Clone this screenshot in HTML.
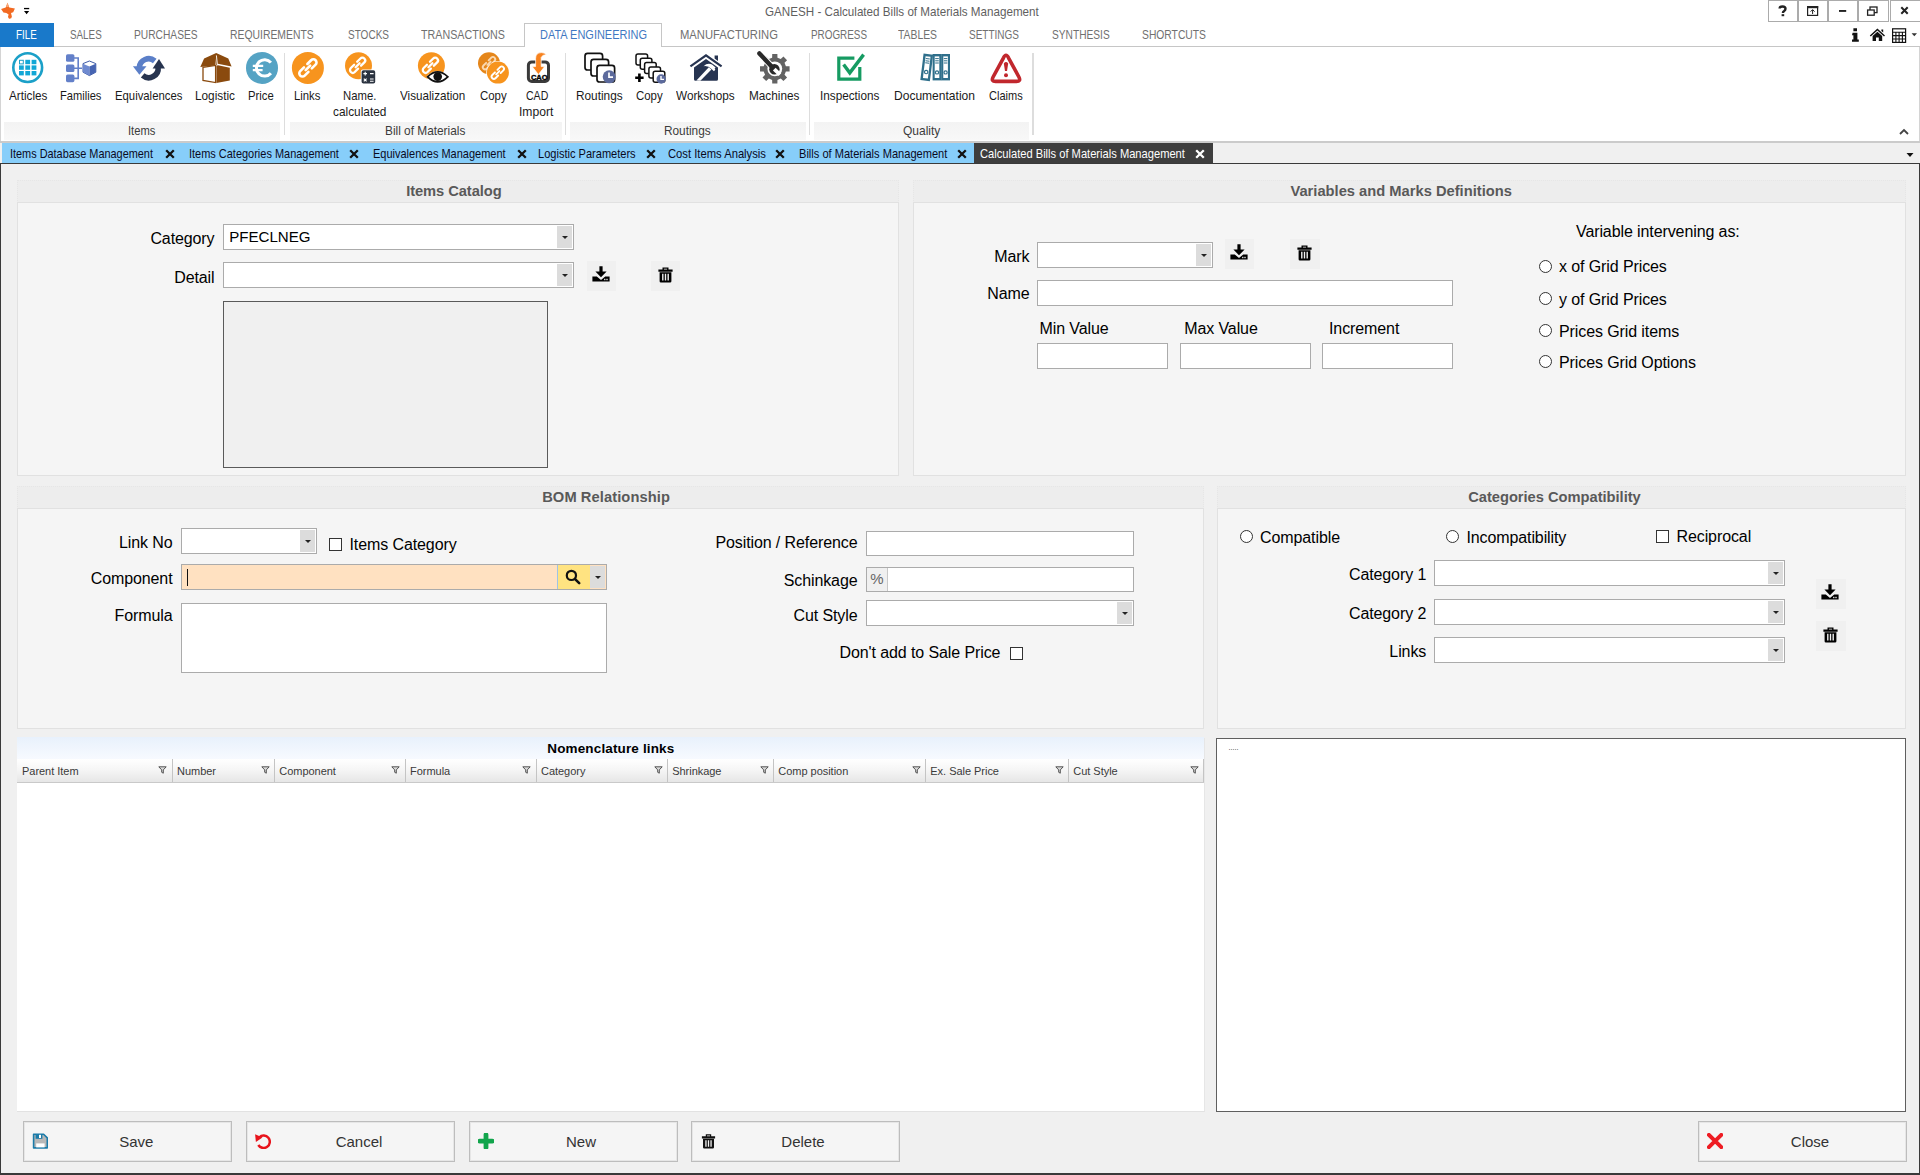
<!DOCTYPE html>
<html lang="en">
<head>
<meta charset="utf-8">
<title>GANESH - Calculated Bills of Materials Management</title>
<style>
*{box-sizing:border-box;margin:0;padding:0}
html,body{width:1920px;height:1175px;overflow:hidden}
body{position:relative;background:#f0f0f0;font-family:"Liberation Sans",sans-serif;color:#000;font-size:16px}
.a{position:absolute}
.t{position:absolute;white-space:nowrap;line-height:1}
/* title / ribbon */
#top{left:0;top:0;width:1920px;height:142px;background:#fff}
.rt{position:absolute;top:28px;font-size:11.6px;color:#6a6a6a;white-space:nowrap;line-height:14px;transform-origin:0 0}
.rl{position:absolute;font-size:11.7px;color:#1e1e1e;white-space:nowrap;line-height:16px;text-align:center;transform:translateX(-50%)}
.gl{position:absolute;top:124px;font-size:11.7px;color:#444;white-space:nowrap;line-height:14px;text-align:center;transform:translateX(-50%)}
.gs{position:absolute;top:122px;height:18px;background:#f4f4f4}
.sep{position:absolute;top:53px;width:1px;height:82px;background:#dcdcdc}
.ic{position:absolute;top:51px;width:34px;height:34px}
/* doc tabs */
.dt{position:absolute;top:147px;font-size:11.5px;color:#0a0a14;white-space:nowrap;line-height:14px}
.dx{position:absolute;top:149px;width:9px;height:9px}
/* panels */
.ph{position:absolute;background:#ededed;border:1px dotted #e6e6e6}
.pb{position:absolute;background:#f5f5f5;border:1px solid #e1e1e1}
.pt{position:absolute;font-weight:bold;font-size:14.6px;color:#595959;white-space:nowrap;line-height:16px;transform:translateX(-50%)}
.lb{position:absolute;white-space:nowrap;line-height:18px;font-size:16px;color:#000}
.lr{text-align:right}
.in{position:absolute;background:#fff;border:1px solid #ababab}
.db{position:absolute;background:#dcdcdc}
.db:after{content:"";position:absolute;left:50%;top:50%;margin:-1px 0 0 -3px;border:3px solid transparent;border-top:3px solid #222;border-bottom:0}
.sb{position:absolute;width:29.5px;height:30px;background:#f0f0f0}
  .sb svg{position:absolute;left:5.4px;top:5px;width:18px;height:18px}
.rd{position:absolute;width:13px;height:13px;border:1px solid #333;border-radius:50%;background:#fff}
.cb{position:absolute;width:13px;height:13px;border:1px solid #333;background:#fff}
/* grid */
.gh{position:absolute;top:764px;font-size:11.5px;color:#222;white-space:nowrap;line-height:14px}
.gsep{position:absolute;top:759px;width:1px;height:23px;background:#c8c8c8}
.gf{position:absolute;top:765px;width:9px;height:9px}
/* buttons */
.bt{position:absolute;top:1121px;height:41px;width:208.5px;background:#f5f5f5;border:1px solid #bdbdbd;box-shadow:inset 0 0 0 1px #e6e6e6}
.bt span{position:absolute;left:0;right:0;top:11px;text-align:center;font-size:15px;line-height:18px;color:#333}
.bt svg{position:absolute;left:8px;top:11px;width:16px;height:16px}
</style>
</head>
<body>
<div id="top" class="a"></div>
<svg class="a" style="left:0;top:0" width="40" height="22" viewBox="0 0 40 22"><path d="M7.500 2.800 L9.300 7.600 L14.900 8.400 L13.200 12.200 L11 13 L11.900 16.400 Q11.800 18.900 9 18.700 L8 17 L8.600 14.400 L6.400 13 L3.400 12.500 L1.100 9 L5.700 7.600 Z" fill="#f26a22"/><path d="M7.500 2.800 L8.900 7 L6.100 7 Z" fill="#f8a878"/><rect x="24" y="7.900" width="5.200" height="1.300" fill="#000"/><path d="M24 11.100 h5.200 l-2.600 3.200 z" fill="#000"/></svg>
<span class="t" style="top:3.8px;font-size:12.4px;line-height:16px;left:765px;transform:scaleX(0.9399);transform-origin:0 0;color:#5f5f5f;">GANESH - Calculated Bills of Materials Management</span>
<div class="a" style="left:1768px;top:0px;width:30px;height:22px;border:1px solid #ababab;background:#fff"></div>
<div class="a" style="left:1798px;top:0px;width:30px;height:22px;border:1px solid #ababab;background:#fff"></div>
<div class="a" style="left:1828px;top:0px;width:30px;height:22px;border:1px solid #ababab;background:#fff"></div>
<div class="a" style="left:1858px;top:0px;width:30.5px;height:22px;border:1px solid #ababab;background:#fff"></div>
<div class="a" style="left:1890px;top:0px;width:31px;height:22px;border:1px solid #ababab;background:#fff"></div>
<svg class="a" style="left:1760px;top:0" width="160" height="46" viewBox="1760 0 160 46"><path d="M1779.6 8.6 q0 -2.1 2.9 -2.1 q3 0 3 2.3 q0 1.3 -1.3 2.1 q-1.3 .8 -1.3 2.1" fill="none" stroke="#222" stroke-width="2.4"/><rect x="1781.600" y="14.200" width="2.600" height="2" fill="#222"/><rect x="1807.6" y="6.6" width="10" height="8.8" fill="none" stroke="#222" stroke-width="1.2"/><rect x="1807" y="6" width="11.2" height="2.2" fill="#222"/><path d="M1812.6 14 v-4 M1810.6 11.6 l2 -2 l2 2" fill="none" stroke="#222" stroke-width="1"/><rect x="1839" y="10" width="7.2" height="1.9" fill="#222"/><rect x="1870" y="7" width="7" height="5.6" fill="#fff" stroke="#222" stroke-width="1.3"/><rect x="1867.6" y="10" width="6.6" height="5.2" fill="#fff" stroke="#222" stroke-width="1.3"/><path d="M1901.3 7.3 l6.4 6.4 M1907.7 7.3 l-6.4 6.4" stroke="#222" stroke-width="2"/><path d="M1853.4 28.2 h3.6 v3 h-3.6z M1852.6 32.8 h4.8 v6.6 h1.4 v2.4 h-6.8 v-2.4 h1.4 v-4.2 h-1.4z" fill="#111"/><path d="M1877.4 28.6 l7.6 6.8 l-1 1 l-6.6 -5.8 l-6.6 5.8 l-1 -1z M1872.6 36 l4.8 -4.2 l4.8 4.2 v5 h-3.4 v-3.6 h-2.8 v3.6 h-3.4z M1881.4 29.4 h1.8 v3.2 l-1.8 -1.6z" fill="#111"/><rect x="1892.6" y="28.8" width="13" height="13.6" fill="#fff" stroke="#111" stroke-width="1.2"/><path d="M1892.6 32.2 h13 M1892.6 35.6 h13 M1892.6 39 h13 M1895.9 32.2 v10 M1899.1 32.2 v10 M1902.4 32.2 v10" stroke="#111" stroke-width="1.1"/><path d="M1911.6 33.2 h5.4 l-2.7 3z" fill="#333"/></svg>
<div class="a" style="left:0px;top:46px;width:1920px;height:1px;background:#c6c6c6"></div>
<div class="a" style="left:0px;top:23px;width:54px;height:24px;background:#1979ca"></div>
<div class="a" style="left:524px;top:23px;width:138px;height:24px;background:#fff;border:1px solid #c6c6c6;border-bottom:0"></div>
<span class="t" style="top:26.63px;font-size:12.6px;line-height:16px;left:16px;transform:scaleX(0.7779);transform-origin:0 0;color:#fff;">FILE</span>
<span class="t" style="top:26.63px;font-size:12.6px;line-height:16px;left:70px;transform:scaleX(0.7803);transform-origin:0 0;color:#707070;">SALES</span>
<span class="t" style="top:26.63px;font-size:12.6px;line-height:16px;left:134.3px;transform:scaleX(0.8123);transform-origin:0 0;color:#707070;">PURCHASES</span>
<span class="t" style="top:26.63px;font-size:12.6px;line-height:16px;left:230.3px;transform:scaleX(0.8246);transform-origin:0 0;color:#707070;">REQUIREMENTS</span>
<span class="t" style="top:26.63px;font-size:12.6px;line-height:16px;left:348px;transform:scaleX(0.7949);transform-origin:0 0;color:#707070;">STOCKS</span>
<span class="t" style="top:26.63px;font-size:12.6px;line-height:16px;left:421px;transform:scaleX(0.8510);transform-origin:0 0;color:#707070;">TRANSACTIONS</span>
<span class="t" style="top:26.63px;font-size:12.6px;line-height:16px;left:540.3px;transform:scaleX(0.8717);transform-origin:0 0;color:#3f78c2;">DATA ENGINEERING</span>
<span class="t" style="top:26.63px;font-size:12.6px;line-height:16px;left:680.3px;transform:scaleX(0.8917);transform-origin:0 0;color:#707070;">MANUFACTURING</span>
<span class="t" style="top:26.63px;font-size:12.6px;line-height:16px;left:811px;transform:scaleX(0.7841);transform-origin:0 0;color:#707070;">PROGRESS</span>
<span class="t" style="top:26.63px;font-size:12.6px;line-height:16px;left:898px;transform:scaleX(0.8230);transform-origin:0 0;color:#707070;">TABLES</span>
<span class="t" style="top:26.63px;font-size:12.6px;line-height:16px;left:969.3px;transform:scaleX(0.7936);transform-origin:0 0;color:#707070;">SETTINGS</span>
<span class="t" style="top:26.63px;font-size:12.6px;line-height:16px;left:1052.3px;transform:scaleX(0.8079);transform-origin:0 0;color:#707070;">SYNTHESIS</span>
<span class="t" style="top:26.63px;font-size:12.6px;line-height:16px;left:1142px;transform:scaleX(0.8187);transform-origin:0 0;color:#707070;">SHORTCUTS</span>
<div class="a" style="left:0px;top:47px;width:1px;height:94px;background:#d4d4d4"></div>
<div class="a" style="left:1919px;top:47px;width:1px;height:94px;background:#d4d4d4"></div>
<div class="a" style="left:0px;top:140.8px;width:1920px;height:1.8px;background:#cbcbcb"></div>
<div class="a" style="left:3.5px;top:122px;width:276.5px;height:17.5px;background:linear-gradient(#f3f3f3,#f8f8f8)"></div>
<div class="a" style="left:289.5px;top:122px;width:272.2px;height:17.5px;background:linear-gradient(#f3f3f3,#f8f8f8)"></div>
<div class="a" style="left:570px;top:122px;width:235.7px;height:17.5px;background:linear-gradient(#f3f3f3,#f8f8f8)"></div>
<div class="a" style="left:814.3px;top:122px;width:215px;height:17.5px;background:linear-gradient(#f3f3f3,#f8f8f8)"></div>
<div class="a" style="left:283.5px;top:53px;width:1.4px;height:82px;background:#dddddd"></div>
<div class="a" style="left:564.8px;top:53px;width:1.4px;height:82px;background:#dddddd"></div>
<div class="a" style="left:808.5px;top:53px;width:1.4px;height:82px;background:#dddddd"></div>
<div class="a" style="left:1032.3px;top:53px;width:1.4px;height:82px;background:#dddddd"></div>
<span class="t" style="top:123.1px;font-size:12.4px;line-height:16px;left:128.3px;transform:scaleX(0.9038);transform-origin:0 0;color:#3c3c3c;">Items</span>
<span class="t" style="top:123.1px;font-size:12.4px;line-height:16px;left:385.3px;transform:scaleX(0.9563);transform-origin:0 0;color:#3c3c3c;">Bill of Materials</span>
<span class="t" style="top:123.1px;font-size:12.4px;line-height:16px;left:664.3px;transform:scaleX(0.9542);transform-origin:0 0;color:#3c3c3c;">Routings</span>
<span class="t" style="top:123.1px;font-size:12.4px;line-height:16px;left:903.3px;transform:scaleX(0.9691);transform-origin:0 0;color:#3c3c3c;">Quality</span>
<span class="t" style="top:88.1px;font-size:12.4px;line-height:16px;left:9.3px;transform:scaleX(0.9446);transform-origin:0 0;color:#1a1a1a;">Articles</span>
<span class="t" style="top:88.1px;font-size:12.4px;line-height:16px;left:60.3px;transform:scaleX(0.8969);transform-origin:0 0;color:#1a1a1a;">Families</span>
<span class="t" style="top:88.1px;font-size:12.4px;line-height:16px;left:115.3px;transform:scaleX(0.9138);transform-origin:0 0;color:#1a1a1a;">Equivalences</span>
<span class="t" style="top:88.1px;font-size:12.4px;line-height:16px;left:195.3px;transform:scaleX(0.9514);transform-origin:0 0;color:#1a1a1a;">Logistic</span>
<span class="t" style="top:88.1px;font-size:12.4px;line-height:16px;left:248.3px;transform:scaleX(0.9097);transform-origin:0 0;color:#1a1a1a;">Price</span>
<span class="t" style="top:88.1px;font-size:12.4px;line-height:16px;left:294.3px;transform:scaleX(0.9120);transform-origin:0 0;color:#1a1a1a;">Links</span>
<span class="t" style="top:88.1px;font-size:12.4px;line-height:16px;left:343.3px;transform:scaleX(0.9145);transform-origin:0 0;color:#1a1a1a;">Name.</span>
<span class="t" style="top:103.9px;font-size:12.4px;line-height:16px;left:333.3px;transform:scaleX(0.9564);transform-origin:0 0;color:#1a1a1a;">calculated</span>
<span class="t" style="top:88.1px;font-size:12.4px;line-height:16px;left:400px;transform:scaleX(0.9410);transform-origin:0 0;color:#1a1a1a;">Visualization</span>
<span class="t" style="top:88.1px;font-size:12.4px;line-height:16px;left:480px;transform:scaleX(0.9224);transform-origin:0 0;color:#1a1a1a;">Copy</span>
<span class="t" style="top:88.1px;font-size:12.4px;line-height:16px;left:526px;transform:scaleX(0.8518);transform-origin:0 0;color:#1a1a1a;">CAD</span>
<span class="t" style="top:103.9px;font-size:12.4px;line-height:16px;left:519.3px;transform:scaleX(0.9789);transform-origin:0 0;color:#1a1a1a;">Import</span>
<span class="t" style="top:88.1px;font-size:12.4px;line-height:16px;left:576px;transform:scaleX(0.9542);transform-origin:0 0;color:#1a1a1a;">Routings</span>
<span class="t" style="top:88.1px;font-size:12.4px;line-height:16px;left:636px;transform:scaleX(0.9224);transform-origin:0 0;color:#1a1a1a;">Copy</span>
<span class="t" style="top:88.1px;font-size:12.4px;line-height:16px;left:676px;transform:scaleX(0.9499);transform-origin:0 0;color:#1a1a1a;">Workshops</span>
<span class="t" style="top:88.1px;font-size:12.4px;line-height:16px;left:749.3px;transform:scaleX(0.9497);transform-origin:0 0;color:#1a1a1a;">Machines</span>
<span class="t" style="top:88.1px;font-size:12.4px;line-height:16px;left:820.3px;transform:scaleX(0.9470);transform-origin:0 0;color:#1a1a1a;">Inspections</span>
<span class="t" style="top:88.1px;font-size:12.4px;line-height:16px;left:894.3px;transform:scaleX(0.9712);transform-origin:0 0;color:#1a1a1a;">Documentation</span>
<span class="t" style="top:88.1px;font-size:12.4px;line-height:16px;left:989.3px;transform:scaleX(0.8894);transform-origin:0 0;color:#1a1a1a;">Claims</span>
<svg class="a" style="left:1896.500px;top:127px" width="14" height="10" viewBox="0 0 14 10"><path d="M3 7 l4 -4 l4 4" fill="none" stroke="#444" stroke-width="1.8"/></svg>
<svg class="a" style="left:0;top:46px" width="1100" height="80" viewBox="0 46 1100 80"><circle cx="27.7" cy="67.6" r="14.4" fill="#fff" stroke="#1ba0c8" stroke-width="2.6"/><rect x="19.5" y="60.3" width="3.8" height="3.6" fill="#fff" stroke="#1ba0c8" stroke-width="1"/><rect x="25.3" y="59.8" width="4.8" height="4.4" fill="#12a7d6"/><rect x="31.6" y="59.8" width="4.8" height="4.4" fill="#12a7d6"/><rect x="19.0" y="65.4" width="4.8" height="4.4" fill="#12a7d6"/><rect x="25.3" y="65.4" width="4.8" height="4.4" fill="#12a7d6"/><rect x="31.6" y="65.4" width="4.8" height="4.4" fill="#12a7d6"/><rect x="19.0" y="71.0" width="4.8" height="4.4" fill="#12a7d6"/><rect x="25.3" y="71.0" width="4.8" height="4.4" fill="#12a7d6"/><rect x="31.6" y="71.0" width="4.8" height="4.4" fill="#12a7d6"/><rect x="66" y="54.2" width="8.4" height="7.6" rx="1.6" fill="#6380c9"/><rect x="66" y="64.4" width="8.4" height="7.6" rx="1.6" fill="#6380c9"/><rect x="66" y="74.6" width="8.4" height="7.6" rx="1.6" fill="#6380c9"/><path d="M74 58 h4.2 v20.4 h-4.2 M74 68.2 h8" fill="none" stroke="#6380c9" stroke-width="1.6"/><path d="M89.4 61 l6.4 2.6 v8.6 l-6.4 3.4 l-6.4 -3.4 v-8.6z" fill="#fff" stroke="#3d5aa6" stroke-width="1"/><path d="M83 63.8 l6.4 2.8 v9 l-6.4 -3.4z" fill="#6f8ad0"/><path d="M95.8 63.8 l-6.4 2.8 v9 l6.4 -3.4z" fill="#4664b2"/><path d="M154.740 61 A9.400 9.400 0 0 0 139.300 67.400" fill="none" stroke="#5b7fc8" stroke-width="5.600"/><path d="M132.900 66.200 h13.600 l-7.100 8.600z" fill="#5b7fc8"/><path d="M142.660 75.400 A9.400 9.400 0 0 0 158.100 67.200" fill="none" stroke="#27344f" stroke-width="5.600"/><path d="M152.600 68.400 l6.400 -9.400 l6 9.400z" fill="#27344f"/><path d="M200.300 67 l3.800 -8.400 l12.100 -5.600 l12.100 5.600 l3.300 8 l-13.800 -2.800 l-1.600 1.600 l0 -9.400 l-.8 9.600z" fill="#8a4a0e"/><path d="M216.400 55.400 l1 9.200" fill="none" stroke="#fff" stroke-width=".9"/><path d="M203 67.400 l12.600 -2 v17.200 l-12.600 -2.200z" fill="#fff" stroke="#8a4a0e" stroke-width="1.300"/><path d="M216.400 65.800 l1.600 -.6 l11.800 2.600 v12.600 l-13.400 2.600z" fill="#8a4a0e"/><circle cx="262" cy="67.9" r="16" fill="#55a3c4"/><path d="M270.900 62.600 A8.200 8.200 0 1 0 270.900 73.200" fill="none" stroke="#fff" stroke-width="3"/><path d="M252.800 65.800 h10.400 M252.800 70.100 h9.800" stroke="#fff" stroke-width="2.300"/><circle cx="307.9" cy="67.9" r="16" fill="#f7941e"/><path d="M310.30 64.75 H315.60 A3.15 3.15 0 0 1 315.60 71.05 H310.30 M305.50 64.75 H300.20 A3.15 3.15 0 0 0 300.20 71.05 H305.50 M304.70 67.90 H311.10" fill="none" stroke="#fff" stroke-width="2.60" stroke-linecap="round" transform="rotate(-45 307.90 67.90)"/><circle cx="358.5" cy="65.700" r="13.500" fill="#f7941e"/><path d="M359.71 62.43 H364.38 A2.77 2.77 0 0 1 364.38 67.97 H359.71 M355.49 62.43 H350.82 A2.77 2.77 0 0 0 350.82 67.97 H355.49 M354.78 65.20 H360.42" fill="none" stroke="#fff" stroke-width="2.29" stroke-linecap="round" transform="rotate(-45 357.60 65.20)"/><rect x="360.8" y="69.4" width="15" height="14.8" rx="2" fill="#fff"/><rect x="361.6" y="70.2" width="13.6" height="13.4" rx="1.8" fill="#2b3340"/><path d="M363.4 73.6 h3.6 M365.2 71.8 v3.6 M370 73.6 h3.6 M363.8 78.6 l2.8 2.8 M366.6 78.6 l-2.8 2.8 M370 79 h3.6 M370 81.2 h3.6" stroke="#fff" stroke-width="1.1"/><circle cx="431.4" cy="65.700" r="13.500" fill="#f7941e"/><path d="M432.51 62.43 H437.18 A2.77 2.77 0 0 1 437.18 67.97 H432.51 M428.29 62.43 H423.62 A2.77 2.77 0 0 0 423.62 67.97 H428.29 M427.58 65.20 H433.22" fill="none" stroke="#fff" stroke-width="2.29" stroke-linecap="round" transform="rotate(-45 430.40 65.20)"/><path d="M426.4 76.8 Q437.7 65.4 449 76.8 Q437.7 88.2 426.4 76.8z" fill="#fff"/><path d="M427.6 76.8 Q437.7 67 447.8 76.8 Q437.7 86.6 427.6 76.8z" fill="#fff" stroke="#111" stroke-width="1.8"/><circle cx="437.7" cy="76.6" r="4.3" fill="#111"/><circle cx="489" cy="63.200" r="11" fill="#e5861a"/><path d="M490.73 60.93 H494.54 A2.27 2.27 0 0 1 494.54 65.47 H490.73 M487.27 60.93 H483.46 A2.27 2.27 0 0 0 483.46 65.47 H487.27 M486.70 63.20 H491.30" fill="none" stroke="#fbd9b0" stroke-width="1.87" stroke-linecap="round" transform="rotate(-45 489.00 63.20)"/><circle cx="497.900" cy="72.600" r="11.700" fill="#fff"/><circle cx="497.900" cy="72.600" r="11" fill="#f7941e"/><path d="M499.53 70.43 H503.34 A2.27 2.27 0 0 1 503.34 74.97 H499.53 M496.07 70.43 H492.26 A2.27 2.27 0 0 0 492.26 74.97 H496.07 M495.50 72.70 H500.10" fill="none" stroke="#fff" stroke-width="1.87" stroke-linecap="round" transform="rotate(-45 497.80 72.70)"/><rect x="528.400" y="61.900" width="20.100" height="19.500" rx="3.400" fill="#fff" stroke="#3a3a3a" stroke-width="3"/><path d="M535.600 66.600 V58.500 Q535.600 52.600 541.500 52.600 Q544.500 52.600 546.400 54.800 Q542.800 54.200 541.200 57.400 V66.600 H544.600 L538.400 74.600 L532.200 66.600 Z" fill="#f7821e" stroke="#fff" stroke-width=".7"/><text x="539.300" y="80.400" font-family="Liberation Sans,sans-serif" font-weight="bold" font-size="7.200" text-anchor="middle" fill="#000" stroke="#000" stroke-width=".35" textLength="16.800" lengthAdjust="spacingAndGlyphs">CAO</text><rect x="585.0" y="53.4" width="17.6" height="16.6" rx="2.6" fill="#fff" stroke="#111" stroke-width="1.7"/><rect x="591.0" y="59.4" width="17.6" height="16.6" rx="2.6" fill="#fff" stroke="#111" stroke-width="1.7"/><rect x="597.0" y="65.4" width="17.6" height="16.6" rx="2.6" fill="#fff" stroke="#111" stroke-width="1.7"/><circle cx="609.2" cy="76.8" r="6.5" fill="#5c6a9c"/><path d="M609 72.6 v4.6 h4" fill="none" stroke="#fff" stroke-width="1.7"/><rect x="636.0" y="54.0" width="11.6" height="11" rx="2" fill="#fff" stroke="#111" stroke-width="1.5"/><rect x="640.3" y="58.3" width="11.6" height="11" rx="2" fill="#fff" stroke="#111" stroke-width="1.5"/><rect x="644.6" y="62.6" width="11.6" height="11" rx="2" fill="#fff" stroke="#111" stroke-width="1.5"/><rect x="648.9" y="66.9" width="11.6" height="11" rx="2" fill="#fff" stroke="#111" stroke-width="1.5"/><rect x="653.2" y="71.2" width="11.6" height="11" rx="2" fill="#fff" stroke="#111" stroke-width="1.5"/><path d="M635.2 77.8 h8.4 M639.4 73.6 v8.4" stroke="#000" stroke-width="2.6"/><circle cx="661.2" cy="79" r="4.7" fill="#5c6a9c"/><path d="M661 76 v3.400 h3" fill="none" stroke="#fff" stroke-width="1.4"/><path d="M706 54 l16.2 11.400 l-1.200 1.800 l-15 -10.400 l-15 10.400 l-1.200 -1.800z" fill="#273451"/><path d="M714.6 55.400 h3.400 v5.600 l-3.400 -2.400z" fill="#273451"/><path d="M694 67.4 l12 -8.400 l12 8.400 v11.800 q0 1.600 -1.600 1.600 h-20.800 q-1.600 0 -1.600 -1.600z" fill="#273451"/><path d="M696.400 80.400 l12.400 -13.200 l2.600 2.200 l-11 11.400z" fill="#fff"/><path d="M703.600 66.200 q3.600 -3.600 8.400 -1.800 l3.600 3.200 l-1 1.200 l.8 .8 l-1.400 1.600 l-2.800 -2.400 q-2.600 -3.200 -7.600 -2.600z" fill="#fff"/><polygon points="789.58,66.22 789.58,71.38 785.89,71.46 784.52,74.76 787.07,77.43 783.43,81.07 780.76,78.52 777.46,79.89 777.38,83.58 772.22,83.58 772.14,79.89 768.84,78.52 766.17,81.07 762.53,77.43 765.08,74.76 763.71,71.46 760.02,71.38 760.02,66.22 763.71,66.14 765.08,62.84 762.53,60.17 766.17,56.53 768.84,59.08 772.14,57.71 772.22,54.02 777.38,54.02 777.46,57.71 780.76,59.08 783.43,56.53 787.07,60.17 784.52,62.84 785.89,66.14" fill="#636363"/><circle cx="774.8" cy="68.800" r="7.400" fill="#fff"/><path d="M759.4 53.4 L771.6 66.4" stroke="#fff" stroke-width="6.4" stroke-linecap="round"/><path d="M759.4 53.4 L771.6 66.4" stroke="#2a2a2a" stroke-width="4.4" stroke-linecap="round"/><circle cx="774.4" cy="69.2" r="5.200" fill="#2a2a2a"/><rect x="772.500" y="69" width="3.800" height="8" fill="#fff" transform="rotate(-45 774.400 69.200)"/><path d="M859.800 67 v12.200 h-21 v-21 h15.600" fill="none" stroke="#169b62" stroke-width="3.2"/><path d="M843.600 64.400 l6.200 8.400 l13.800 -18.200" fill="none" stroke="#169b62" stroke-width="3.400"/><g transform="rotate(7 926 70)"><rect x="921.6" y="54" width="9.6" height="26.6" fill="#2f6f8b"/><rect x="923.900" y="56.400" width="5" height="21.800" fill="#fff"/><path d="M924.400 58.600 h4 M924.400 60.800 h4 M924.400 63 h4" stroke="#2f6f8b" stroke-width="1"/><circle cx="926.400" cy="72" r="1.700" fill="#fff" stroke="#2f6f8b" stroke-width="1.200"/></g><rect x="932.6" y="54" width="8.8" height="26.400" fill="#2f6f8b"/><rect x="934.7" y="56.400" width="4.600" height="21.600" fill="#fff"/><path d="M935.2 58.600 h3.600 M935.2 60.800 h3.600 M935.2 63 h3.600" stroke="#2f6f8b" stroke-width="1"/><circle cx="937.0" cy="72.400" r="1.600" fill="#fff" stroke="#2f6f8b" stroke-width="1.200"/><rect x="941.2" y="54" width="8.8" height="26.400" fill="#2f6f8b"/><rect x="943.3" y="56.400" width="4.600" height="21.600" fill="#fff"/><path d="M943.8 58.600 h3.600 M943.8 60.800 h3.600 M943.8 63 h3.600" stroke="#2f6f8b" stroke-width="1"/><circle cx="945.6" cy="72.400" r="1.600" fill="#fff" stroke="#2f6f8b" stroke-width="1.200"/><path d="M1003.500 57.800 Q1006 52.600 1008.500 57.800 L1018.900 77 Q1021.200 81.400 1016.400 81.400 H995.600 Q990.800 81.400 993.100 77 Z" fill="#fff" stroke="#c1272d" stroke-width="3.600" stroke-linejoin="round"/><path d="M1003.800 63.400 q2.200 -2.800 4.400 0 l-1.200 7.600 h-2z" fill="#c1272d"/><circle cx="1006" cy="75.300" r="2" fill="#c1272d"/></svg>
<div class="a" style="left:0px;top:142.6px;width:1920px;height:21.4px;background:#f0f0f0"></div>
<div class="a" style="left:2px;top:143px;width:972px;height:20px;background:#87cefa"></div>
<div class="a" style="left:974px;top:143px;width:239px;height:20px;background:#3e3e3e"></div>
<div class="a" style="left:0px;top:163px;width:1920px;height:1.4px;background:#3a3a3a"></div>
<span class="t" style="top:146.01px;font-size:12.1px;line-height:16px;left:10px;transform:scaleX(0.9009);transform-origin:0 0;color:#0a0a1e;">Items Database Management</span>
<svg class="a" style="left:164.7px;top:148.6px" width="10" height="10" viewBox="0 0 10 10"><path d="M1.200 1.300 l7.600 7.400 M8.800 1.300 l-7.600 7.400" stroke="#111" stroke-width="2.300"/></svg>
<span class="t" style="top:146.01px;font-size:12.1px;line-height:16px;left:189px;transform:scaleX(0.9066);transform-origin:0 0;color:#0a0a1e;">Items Categories Management</span>
<svg class="a" style="left:349.3px;top:148.6px" width="10" height="10" viewBox="0 0 10 10"><path d="M1.200 1.300 l7.600 7.400 M8.800 1.300 l-7.600 7.400" stroke="#111" stroke-width="2.300"/></svg>
<span class="t" style="top:146.01px;font-size:12.1px;line-height:16px;left:373.3px;transform:scaleX(0.9091);transform-origin:0 0;color:#0a0a1e;">Equivalences Management</span>
<svg class="a" style="left:516.7px;top:148.6px" width="10" height="10" viewBox="0 0 10 10"><path d="M1.200 1.300 l7.600 7.400 M8.800 1.300 l-7.600 7.400" stroke="#111" stroke-width="2.300"/></svg>
<span class="t" style="top:146.01px;font-size:12.1px;line-height:16px;left:538.3px;transform:scaleX(0.9137);transform-origin:0 0;color:#0a0a1e;">Logistic Parameters</span>
<svg class="a" style="left:646.3px;top:148.6px" width="10" height="10" viewBox="0 0 10 10"><path d="M1.200 1.300 l7.600 7.400 M8.800 1.300 l-7.600 7.400" stroke="#111" stroke-width="2.300"/></svg>
<span class="t" style="top:146.01px;font-size:12.1px;line-height:16px;left:668px;transform:scaleX(0.9283);transform-origin:0 0;color:#0a0a1e;">Cost Items Analysis</span>
<svg class="a" style="left:775.3px;top:148.6px" width="10" height="10" viewBox="0 0 10 10"><path d="M1.200 1.300 l7.600 7.400 M8.800 1.300 l-7.600 7.400" stroke="#111" stroke-width="2.300"/></svg>
<span class="t" style="top:146.01px;font-size:12.1px;line-height:16px;left:799.3px;transform:scaleX(0.9156);transform-origin:0 0;color:#0a0a1e;">Bills of Materials Management</span>
<svg class="a" style="left:957.3px;top:148.6px" width="10" height="10" viewBox="0 0 10 10"><path d="M1.200 1.300 l7.600 7.400 M8.800 1.300 l-7.600 7.400" stroke="#111" stroke-width="2.300"/></svg>
<span class="t" style="top:146.01px;font-size:12.1px;line-height:16px;left:980px;transform:scaleX(0.9209);transform-origin:0 0;color:#fff;">Calculated Bills of Materials Management</span>
<svg class="a" style="left:1195px;top:148.6px" width="10" height="10" viewBox="0 0 10 10"><path d="M1.200 1.300 l7.600 7.400 M8.800 1.300 l-7.600 7.400" stroke="#fff" stroke-width="2.300"/></svg>
<svg class="a" style="left:1905px;top:151px" width="10" height="8" viewBox="0 0 10 8"><path d="M1.5 2 h7 l-3.5 4z" fill="#111"/></svg>
<div class="a" style="left:0px;top:164px;width:1.3px;height:1011px;background:#3a3a3a"></div>
<div class="a" style="left:0px;top:1173px;width:1920px;height:2px;background:#3a3a3a"></div>
<div class="a" style="left:1919px;top:164px;width:1px;height:1011px;background:#3a3a3a"></div>
<div class="ph" style="left:17px;top:180px;width:882px;height:23px;"></div>
<div class="pb" style="left:17px;top:202px;width:882px;height:274px;"></div>
<span class="t" style="top:181.91px;font-size:14.7px;line-height:19px;left:406.2px;letter-spacing:-0.07px;color:#595959;font-weight:bold;">Items Catalog</span>
<span class="t" style="top:228.36px;font-size:16px;line-height:21px;left:150.38px;letter-spacing:-0.1px;">Category</span>
<span class="t" style="top:266.96px;font-size:16px;line-height:21px;left:174.19px;letter-spacing:-0.1px;">Detail</span>
<div class="in" style="left:223px;top:224px;width:351px;height:26px;"></div>
<div class="db" style="left:557px;top:226px;width:15px;height:22px;"></div>
<span class="t" style="top:227.37px;font-size:15.1px;line-height:20px;left:229.2px;">PFECLNEG</span>
<div class="in" style="left:223px;top:262px;width:351px;height:26px;"></div>
<div class="db" style="left:557px;top:264px;width:15px;height:22px;"></div>
<div class="sb" style="left:586.5px;top:260.5px"><svg viewBox="0 0 18 18"><path d="M7.4 .2 h3.200 v5.400 h4 l-5.600 5.600 l-5.600 -5.600 h4z" fill="#000"/><path d="M.4 10.600 h4.400 l4.200 3.400 l4.200 -3.400 h4.400 v4.800 h-17.200z" fill="#000"/><rect x="12.200" y="12.800" width="1.200" height="1.400" fill="#fff"/><rect x="14.400" y="12.800" width="1.200" height="1.400" fill="#fff"/></svg></div>
<div class="sb" style="left:650.5px;top:260.5px"><svg viewBox="0 0 18 18"><path d="M2.400 3.500 h4.100 v-1.900 h6 v1.900 h4.100 v2.300 h-14.200z M7.900 2.800 v.7 h3.200 v-.7z" fill="#000" fill-rule="evenodd"/><path d="M3.600 6.200 h11.800 v9 q0 1.300 -1.300 1.300 h-9.200 q-1.300 0 -1.300 -1.300z M6.100 7.800 v6.800 h1.400 v-6.800z M8.800 7.800 v6.800 h1.400 v-6.800z M11.500 7.800 v6.800 h1.400 v-6.800z" fill="#000" fill-rule="evenodd"/></svg></div>
<div class="a" style="left:223px;top:301px;width:325px;height:167px;background:#f0f0f0;border:1px solid #5a5a5a"></div>
<div class="ph" style="left:913px;top:180px;width:993px;height:23px;"></div>
<div class="pb" style="left:913px;top:202px;width:993px;height:274px;"></div>
<span class="t" style="top:181.91px;font-size:14.7px;line-height:19px;left:1290.4px;letter-spacing:0.01px;color:#595959;font-weight:bold;">Variables and Marks Definitions</span>
<span class="t" style="top:245.96px;font-size:16px;line-height:21px;left:994.34px;letter-spacing:-0.1px;">Mark</span>
<span class="t" style="top:282.56px;font-size:16px;line-height:21px;left:987.22px;letter-spacing:-0.1px;">Name</span>
<div class="in" style="left:1037px;top:242px;width:176px;height:26px;"></div>
<div class="db" style="left:1196px;top:244px;width:15px;height:22px;"></div>
<div class="sb" style="left:1224.5px;top:238.5px"><svg viewBox="0 0 18 18"><path d="M7.4 .2 h3.200 v5.400 h4 l-5.600 5.600 l-5.600 -5.600 h4z" fill="#000"/><path d="M.4 10.600 h4.400 l4.200 3.400 l4.200 -3.400 h4.400 v4.800 h-17.200z" fill="#000"/><rect x="12.200" y="12.800" width="1.200" height="1.400" fill="#fff"/><rect x="14.400" y="12.800" width="1.200" height="1.400" fill="#fff"/></svg></div>
<div class="sb" style="left:1290px;top:238.5px"><svg viewBox="0 0 18 18"><path d="M2.400 3.500 h4.100 v-1.900 h6 v1.900 h4.100 v2.300 h-14.200z M7.900 2.800 v.7 h3.200 v-.7z" fill="#000" fill-rule="evenodd"/><path d="M3.600 6.200 h11.800 v9 q0 1.300 -1.300 1.300 h-9.200 q-1.300 0 -1.300 -1.300z M6.100 7.800 v6.800 h1.400 v-6.800z M8.800 7.800 v6.800 h1.400 v-6.800z M11.500 7.800 v6.800 h1.400 v-6.800z" fill="#000" fill-rule="evenodd"/></svg></div>
<div class="in" style="left:1037px;top:280px;width:416px;height:26px;"></div>
<span class="t" style="top:317.66px;font-size:16px;line-height:21px;left:1039.5px;letter-spacing:-0.1px;">Min Value</span>
<span class="t" style="top:317.66px;font-size:16px;line-height:21px;left:1184.2px;letter-spacing:-0.1px;">Max Value</span>
<span class="t" style="top:317.66px;font-size:16px;line-height:21px;left:1329px;letter-spacing:-0.1px;">Increment</span>
<div class="in" style="left:1037px;top:343px;width:131px;height:26px;"></div>
<div class="in" style="left:1180px;top:343px;width:131px;height:26px;"></div>
<div class="in" style="left:1322px;top:343px;width:131px;height:26px;"></div>
<span class="t" style="top:220.76px;font-size:16px;line-height:21px;left:1576px;letter-spacing:-0.1px;">Variable intervening as:</span>
<div class="rd" style="left:1539px;top:259.8px"></div>
<span class="t" style="top:256.26px;font-size:16px;line-height:21px;left:1559px;letter-spacing:-0.1px;">x of Grid Prices</span>
<div class="rd" style="left:1539px;top:291.9px"></div>
<span class="t" style="top:288.56px;font-size:16px;line-height:21px;left:1559px;letter-spacing:-0.1px;">y of Grid Prices</span>
<div class="rd" style="left:1539px;top:324.1px"></div>
<span class="t" style="top:320.66px;font-size:16px;line-height:21px;left:1559px;letter-spacing:-0.1px;">Prices Grid items</span>
<div class="rd" style="left:1539px;top:355.2px"></div>
<span class="t" style="top:351.96px;font-size:16px;line-height:21px;left:1559px;letter-spacing:-0.1px;">Prices Grid Options</span>
<div class="ph" style="left:17px;top:486px;width:1187px;height:23px;"></div>
<div class="pb" style="left:17px;top:508px;width:1187px;height:221px;"></div>
<span class="t" style="top:487.91px;font-size:14.7px;line-height:19px;left:542.2px;letter-spacing:0.08px;color:#595959;font-weight:bold;">BOM Relationship</span>
<span class="t" style="top:531.96px;font-size:16px;line-height:21px;left:118.95px;letter-spacing:-0.1px;">Link No</span>
<span class="t" style="top:567.96px;font-size:16px;line-height:21px;left:90.68px;letter-spacing:-0.1px;">Component</span>
<span class="t" style="top:605.26px;font-size:16px;line-height:21px;left:114.52px;letter-spacing:-0.1px;">Formula</span>
<div class="in" style="left:181px;top:528px;width:136px;height:26px;"></div>
<div class="db" style="left:300px;top:530px;width:15px;height:22px;"></div>
<div class="cb" style="left:329px;top:538px"></div>
<span class="t" style="top:534.46px;font-size:16px;line-height:21px;left:349.5px;letter-spacing:-0.1px;">Items Category</span>
<div class="in" style="left:181px;top:564px;width:426px;height:26px;background:#ffe1c1"></div>
<div class="a" style="left:557px;top:565px;width:32.5px;height:24px;background:#ffe381;border-left:1px solid #9fc3e6"></div>
<svg class="a" style="left:564px;top:568px" width="18" height="18" viewBox="0 0 18 18"><circle cx="7.4" cy="7.4" r="4.6" fill="none" stroke="#111" stroke-width="2.2"/><path d="M10.8 10.8 l4.4 4.4" stroke="#111" stroke-width="2.6" stroke-linecap="round"/></svg>
<div class="db" style="left:590px;top:566px;width:15px;height:22px;"></div>
<div class="a" style="left:187px;top:569px;width:1.2px;height:16.5px;background:#111"></div>
<div class="in" style="left:181px;top:603px;width:426px;height:70px;"></div>
<span class="t" style="top:531.96px;font-size:16px;line-height:21px;left:715.42px;letter-spacing:-0.1px;">Position / Reference</span>
<span class="t" style="top:569.66px;font-size:16px;line-height:21px;left:783.68px;letter-spacing:-0.1px;">Schinkage</span>
<span class="t" style="top:605.26px;font-size:16px;line-height:21px;left:793.49px;letter-spacing:-0.1px;">Cut Style</span>
<div class="in" style="left:866px;top:531px;width:268px;height:25px;"></div>
<div class="in" style="left:866px;top:567px;width:268px;height:25px;"></div>
<div class="a" style="left:867px;top:568px;width:20.5px;height:23px;background:#f0f0f0;border-right:1px solid #c8c8c8"></div>
<span class="t" style="top:569.4px;font-size:15px;line-height:20px;left:870.33px;letter-spacing:-0.1px;color:#666;">%</span>
<div class="in" style="left:866px;top:600px;width:268px;height:26px;"></div>
<div class="db" style="left:1117px;top:602px;width:15px;height:22px;"></div>
<span class="t" style="top:641.96px;font-size:16px;line-height:21px;left:839.5px;letter-spacing:-0.1px;">Don't add to Sale Price</span>
<div class="cb" style="left:1010px;top:647px"></div>
<div class="ph" style="left:1217px;top:486px;width:689px;height:23px;"></div>
<div class="pb" style="left:1217px;top:508px;width:689px;height:221px;"></div>
<span class="t" style="top:487.91px;font-size:14.7px;line-height:19px;left:1468.2px;letter-spacing:-0.02px;color:#595959;font-weight:bold;">Categories Compatibility</span>
<div class="rd" style="left:1239.7px;top:530.2px"></div>
<span class="t" style="top:527.26px;font-size:16px;line-height:21px;left:1260px;letter-spacing:-0.1px;">Compatible</span>
<div class="rd" style="left:1445.8px;top:530.2px"></div>
<span class="t" style="top:527.26px;font-size:16px;line-height:21px;left:1466.4px;letter-spacing:-0.1px;">Incompatibility</span>
<div class="cb" style="left:1655.8px;top:529.8px"></div>
<span class="t" style="top:526.26px;font-size:16px;line-height:21px;left:1676.5px;letter-spacing:-0.1px;">Reciprocal</span>
<span class="t" style="top:563.96px;font-size:16px;line-height:21px;left:1348.93px;letter-spacing:-0.1px;">Category 1</span>
<span class="t" style="top:603.26px;font-size:16px;line-height:21px;left:1348.93px;letter-spacing:-0.1px;">Category 2</span>
<span class="t" style="top:640.96px;font-size:16px;line-height:21px;left:1389.35px;letter-spacing:-0.1px;">Links</span>
<div class="in" style="left:1434px;top:560px;width:351px;height:26px;"></div>
<div class="db" style="left:1768px;top:562px;width:15px;height:22px;"></div>
<div class="in" style="left:1434px;top:599px;width:351px;height:26px;"></div>
<div class="db" style="left:1768px;top:601px;width:15px;height:22px;"></div>
<div class="in" style="left:1434px;top:637px;width:351px;height:26px;"></div>
<div class="db" style="left:1768px;top:639px;width:15px;height:22px;"></div>
<div class="sb" style="left:1816px;top:578.7px"><svg viewBox="0 0 18 18"><path d="M7.4 .2 h3.200 v5.400 h4 l-5.600 5.600 l-5.600 -5.600 h4z" fill="#000"/><path d="M.4 10.600 h4.400 l4.200 3.400 l4.200 -3.400 h4.400 v4.800 h-17.200z" fill="#000"/><rect x="12.200" y="12.800" width="1.200" height="1.400" fill="#fff"/><rect x="14.400" y="12.800" width="1.200" height="1.400" fill="#fff"/></svg></div>
<div class="sb" style="left:1816px;top:620.5px"><svg viewBox="0 0 18 18"><path d="M2.400 3.500 h4.100 v-1.900 h6 v1.900 h4.100 v2.300 h-14.200z M7.900 2.800 v.7 h3.200 v-.7z" fill="#000" fill-rule="evenodd"/><path d="M3.600 6.200 h11.800 v9 q0 1.300 -1.300 1.300 h-9.200 q-1.300 0 -1.300 -1.300z M6.100 7.800 v6.800 h1.400 v-6.800z M8.800 7.800 v6.800 h1.400 v-6.800z M11.500 7.800 v6.800 h1.400 v-6.800z" fill="#000" fill-rule="evenodd"/></svg></div>
<div class="a" style="left:17px;top:738px;width:1187.7px;height:374px;background:#fff;border-bottom:1px solid #e2e2e2;border-right:1px solid #e6e6e6"></div>
<div class="a" style="left:17px;top:737px;width:1187px;height:22px;background:linear-gradient(#e8f1fc,#f7faff)"></div>
<span class="t" style="top:740.02px;font-size:13.5px;line-height:18px;left:547.3px;letter-spacing:0.14px;color:#000;font-weight:bold;">Nomenclature links</span>
<div class="a" style="left:17px;top:759px;width:1187px;height:24px;background:linear-gradient(#ffffff 0%,#f6f6f6 45%,#e6e6e6 100%);border-bottom:1px solid #c9c9c9"></div>
<span class="t" style="top:764.29px;font-size:11px;line-height:14px;left:22px;letter-spacing:-0.03px;color:#3a3a3a;">Parent Item</span>
<div class="a" style="left:171.8px;top:759px;width:1px;height:23px;background:#c4c4c4"></div>
<svg class="a" style="left:158.3px;top:765.7px" width="9" height="9" viewBox="0 0 9 9"><path d="M.8 .8 h7.400 l-2.900 3.100 v3.300 l-1.600 -.9 v-2.400z" fill="#d8d8d8" stroke="#555" stroke-width="1"/></svg>
<span class="t" style="top:764.29px;font-size:11px;line-height:14px;left:177px;letter-spacing:-0.03px;color:#3a3a3a;">Number</span>
<div class="a" style="left:274.1px;top:759px;width:1px;height:23px;background:#c4c4c4"></div>
<svg class="a" style="left:260.6px;top:765.7px" width="9" height="9" viewBox="0 0 9 9"><path d="M.8 .8 h7.400 l-2.900 3.100 v3.300 l-1.600 -.9 v-2.400z" fill="#d8d8d8" stroke="#555" stroke-width="1"/></svg>
<span class="t" style="top:764.29px;font-size:11px;line-height:14px;left:279.3px;letter-spacing:-0.03px;color:#3a3a3a;">Component</span>
<div class="a" style="left:404.8px;top:759px;width:1px;height:23px;background:#c4c4c4"></div>
<svg class="a" style="left:391.3px;top:765.7px" width="9" height="9" viewBox="0 0 9 9"><path d="M.8 .8 h7.400 l-2.900 3.100 v3.300 l-1.600 -.9 v-2.400z" fill="#d8d8d8" stroke="#555" stroke-width="1"/></svg>
<span class="t" style="top:764.29px;font-size:11px;line-height:14px;left:410px;letter-spacing:-0.03px;color:#3a3a3a;">Formula</span>
<div class="a" style="left:535.8px;top:759px;width:1px;height:23px;background:#c4c4c4"></div>
<svg class="a" style="left:522.3px;top:765.7px" width="9" height="9" viewBox="0 0 9 9"><path d="M.8 .8 h7.400 l-2.900 3.100 v3.300 l-1.600 -.9 v-2.400z" fill="#d8d8d8" stroke="#555" stroke-width="1"/></svg>
<span class="t" style="top:764.29px;font-size:11px;line-height:14px;left:541px;letter-spacing:-0.03px;color:#3a3a3a;">Category</span>
<div class="a" style="left:667px;top:759px;width:1px;height:23px;background:#c4c4c4"></div>
<svg class="a" style="left:653.5px;top:765.7px" width="9" height="9" viewBox="0 0 9 9"><path d="M.8 .8 h7.400 l-2.900 3.100 v3.300 l-1.600 -.9 v-2.400z" fill="#d8d8d8" stroke="#555" stroke-width="1"/></svg>
<span class="t" style="top:764.29px;font-size:11px;line-height:14px;left:672.2px;letter-spacing:-0.03px;color:#3a3a3a;">Shrinkage</span>
<div class="a" style="left:773.1px;top:759px;width:1px;height:23px;background:#c4c4c4"></div>
<svg class="a" style="left:759.6px;top:765.7px" width="9" height="9" viewBox="0 0 9 9"><path d="M.8 .8 h7.400 l-2.900 3.100 v3.300 l-1.600 -.9 v-2.400z" fill="#d8d8d8" stroke="#555" stroke-width="1"/></svg>
<span class="t" style="top:764.29px;font-size:11px;line-height:14px;left:778.3px;letter-spacing:-0.03px;color:#3a3a3a;">Comp position</span>
<div class="a" style="left:925.1px;top:759px;width:1px;height:23px;background:#c4c4c4"></div>
<svg class="a" style="left:911.6px;top:765.7px" width="9" height="9" viewBox="0 0 9 9"><path d="M.8 .8 h7.400 l-2.900 3.100 v3.300 l-1.600 -.9 v-2.400z" fill="#d8d8d8" stroke="#555" stroke-width="1"/></svg>
<span class="t" style="top:764.29px;font-size:11px;line-height:14px;left:930.3px;letter-spacing:-0.03px;color:#3a3a3a;">Ex. Sale Price</span>
<div class="a" style="left:1068.1px;top:759px;width:1px;height:23px;background:#c4c4c4"></div>
<svg class="a" style="left:1054.6px;top:765.7px" width="9" height="9" viewBox="0 0 9 9"><path d="M.8 .8 h7.400 l-2.900 3.100 v3.300 l-1.600 -.9 v-2.400z" fill="#d8d8d8" stroke="#555" stroke-width="1"/></svg>
<span class="t" style="top:764.29px;font-size:11px;line-height:14px;left:1073.3px;letter-spacing:-0.03px;color:#3a3a3a;">Cut Style</span>
<div class="a" style="left:1203.3px;top:759px;width:1px;height:23px;background:#c4c4c4"></div>
<svg class="a" style="left:1189.8px;top:765.7px" width="9" height="9" viewBox="0 0 9 9"><path d="M.8 .8 h7.400 l-2.900 3.100 v3.300 l-1.600 -.9 v-2.400z" fill="#d8d8d8" stroke="#555" stroke-width="1"/></svg>
<div class="a" style="left:1216px;top:738px;width:690px;height:373.5px;background:#fff;border:1px solid #5f5f5f"></div>
<span class="t" style="top:743.01px;font-size:7.2px;line-height:9px;left:1228.4px;color:#222;">.....</span>
<div class="bt" style="left:23px"><svg viewBox="0 0 16 16"><path d="M1.600 1.200 h10 l3.700 3.700 v10 h-13.700z" fill="#b8b8b8" stroke="#1b7ba9" stroke-width="1.600" stroke-linejoin="round"/><rect x="3.600" y="1.400" width="6.800" height="4.400" fill="#1b7ba9"/><rect x="7" y="1.800" width="2" height="3.200" fill="#fff"/><rect x="4.200" y="10.400" width="8.400" height="4" fill="#fff"/></svg></div>
<span class="t" style="top:1131.6px;font-size:15px;line-height:20px;left:119.21px;color:#333;">Save</span>
<div class="bt" style="left:246px"><svg viewBox="0 0 16 16"><path d="M3.300 12 A6.200 6.200 0 1 0 4.300 4.300" fill="none" stroke="#e8141c" stroke-width="2.500"/><path d="M.1 1.300 l7.400 3.300 l-6.600 4.300z" fill="#e8141c"/></svg></div>
<span class="t" style="top:1131.6px;font-size:15px;line-height:20px;left:335.65px;color:#333;">Cancel</span>
<div class="bt" style="left:469px"><svg viewBox="0 0 16 16"><path d="M8 1.800 v12.600 M1.600 8.100 h12.800" stroke="#12a54c" stroke-width="4.800" stroke-linecap="round" fill="none" transform="translate(0 0)"/></svg></div>
<span class="t" style="top:1131.6px;font-size:15px;line-height:20px;left:566px;color:#333;">New</span>
<div class="bt" style="left:691px"><svg viewBox="0 0 16 16"><path d="M1.900 3.200 h3.900 v-1.900 h5.400 v1.900 h3.900 v2.200 h-13.200z M7 2.500 v.7 h3 v-.7z" fill="#111" fill-rule="evenodd"/><path d="M3 5.800 h11 v8.400 q0 1.300 -1.300 1.300 h-8.400 q-1.300 0 -1.300 -1.300z M5.300 7.300 v6.400 h1.300 v-6.400z M7.850 7.300 v6.400 h1.300 v-6.400z M10.400 7.300 v6.400 h1.300 v-6.400z" fill="#111" fill-rule="evenodd"/></svg></div>
<span class="t" style="top:1131.6px;font-size:15px;line-height:20px;left:781.32px;color:#333;">Delete</span>
<div class="bt" style="left:1698px"><svg viewBox="0 0 16 16"><path d="M1.900 1.900 l12.400 12.300 M14.300 1.900 l-12.400 12.300" stroke="#ee1c23" stroke-width="4" stroke-linecap="round"/></svg></div>
<span class="t" style="top:1131.6px;font-size:15px;line-height:20px;left:1790.83px;color:#333;">Close</span>
</body>
</html>
